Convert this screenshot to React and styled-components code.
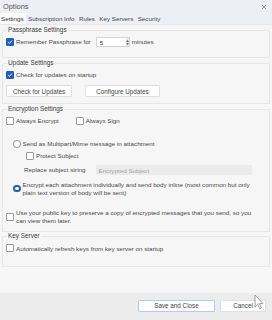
import React from "react";
import styled, { createGlobalStyle } from "styled-components";

const GlobalStyle = createGlobalStyle`
  html, body {
    margin: 0;
    padding: 0;
    background: #f6f6f6;
  }
  body {
    font-family: "Liberation Sans", Arial, sans-serif;
    -webkit-font-smoothing: antialiased;
  }
`;

const Window = styled.div`
  position: relative;
  width: 272px;
  height: 320px;
  overflow: hidden;
  display: flex;
  flex-direction: column;
  background: #f6f6f6;
  color: #4a4a4a;
  font-size: 6.25px;
`;

const TitleBar = styled.div`
  height: 13px;
  display: flex;
  align-items: center;
  justify-content: space-between;
  padding: 0 5px 0 3px;
  background: #eeeff6;
  color: #555;
  font-size: 7.4px;
`;

const TabBar = styled.div`
  height: 11px;
  display: flex;
  align-items: stretch;
  background: #eeeff6;
  border-bottom: 1px solid #e8e8ec;
`;

const Tab = styled.div`
  display: flex;
  align-items: center;
  padding: 0 2.2px 0 ${(p) => (p.$first ? "1px" : "2.2px")};
  color: ${(p) => (p.$active ? "#333" : "#444")};
  background: ${(p) => (p.$active ? "#fafafa" : "transparent")};
`;

const Content = styled.div`
  flex: 1;
  display: flex;
  flex-direction: column;
  padding: 0 2px;
`;

const Group = styled.fieldset`
  margin: ${(p) => p.$mt || 0}px 0 0;
  padding: ${(p) => p.$pt || 4}px 3px ${(p) => p.$pb || 6}px;
  border: 1px solid #e6e6e6;
  border-radius: 1px;
  min-width: 0;
  display: flex;
  flex-direction: column;
`;

const Legend = styled.legend`
  padding: 0 1px;
  margin-left: 1px;
  line-height: 8px;
  font-size: 6.4px;
  color: #3c3c3c;
`;

const Row = styled.div`
  display: flex;
  align-items: center;
  gap: ${(p) => p.$gap || 2}px;
  margin-top: ${(p) => p.$mt || 0}px;
  padding-left: ${(p) => p.$indent || 0}px;
  min-height: 8px;
`;

const Label = styled.span`
  line-height: 7.6px;
  color: #4a4a4a;
`;

const Box = styled.span`
  flex: none;
  width: 6px;
  height: 6px;
  border-radius: 1px;
  border: 0.8px solid ${(p) => (p.$checked ? "#1f5fbf" : "#9a9a9a")};
  background: ${(p) => (p.$checked ? "#1f5fbf" : "#fff")};
  display: flex;
  align-items: center;
  justify-content: center;
`;

const Radio = styled.span`
  flex: none;
  box-sizing: border-box;
  width: 7.5px;
  height: 7.5px;
  border-radius: 50%;
  border: ${(p) => (p.$checked ? "2.2px solid #1c5fd0" : "0.8px solid #8f8f8f")};
  background: #fff;
`;

const Check = ({ checked }) => (
  <Box $checked={checked}>
    {checked && (
      <svg width="6" height="6" viewBox="0 0 10 10">
        <path d="M2 5.3 L4.1 7.3 L8.2 2.6" stroke="#fff" strokeWidth="1.5" fill="none" />
      </svg>
    )}
  </Box>
);

const NumberInput = styled.div`
  width: 29px;
  height: 8px;
  margin-left: 3px;
  display: flex;
  align-items: center;
  justify-content: space-between;
  background: #fff;
  border: 0.6px solid #d4d4d4;
  padding: 0 0 0 3px;
  color: #333;
`;

const Spinner = styled.span`
  display: flex;
  flex-direction: column;
  justify-content: center;
  gap: 1px;
  width: 3px;
  height: 100%;
  background: #e8e8e8;
  align-items: center;
`;

const Button = styled.button`
  font: inherit;
  font-size: 6.3px;
  color: #444;
  height: 12px;
  width: ${(p) => p.$w}px;
  padding: 0;
  background: #fff;
  border: 0.8px solid ${(p) => (p.$primary ? "#b8cbea" : "#e0e0e0")};
  border-radius: 1px;
`;

const TextField = styled.div`
  width: 153px;
  height: 10px;
  display: flex;
  align-items: center;
  padding-left: 3px;
  margin-left: 8px;
  background: #ebebeb;
  border-radius: 1px;
  color: #a2a2a2;
`;

const Footer = styled.div`
  height: 27px;
  display: flex;
  align-items: center;
  justify-content: flex-end;
  gap: 5px;
  padding: 0 6px 2px 0;
  box-sizing: border-box;
  background: #ececec;
`;

const Cursor = styled.svg`
  position: absolute;
  left: 254px;
  top: 294px;
`;

const CloseIcon = () => (
  <svg width="6" height="6" viewBox="0 0 6 6">
    <path d="M1 1 L5 5 M5 1 L1 5" stroke="#555" strokeWidth="0.6" />
  </svg>
);

export default function App() {
  return (
    <>
      <GlobalStyle />
      <Window>
        <TitleBar>
          <span>Options</span>
          <CloseIcon />
        </TitleBar>
        <TabBar>
          <Tab $active $first>Settings</Tab>
          <Tab>Subscription Info</Tab>
          <Tab>Rules</Tab>
          <Tab>Key Servers</Tab>
          <Tab>Security</Tab>
        </TabBar>
        <Content>
          <Group $mt={1} $pt={3} $pb={10}>
            <Legend>Passphrase Settings</Legend>
            <Row>
              <Check checked />
              <Label>Remember Passphrase for</Label>
              <NumberInput>
                <span>5</span>
                <Spinner>
                  <svg width="3" height="2" viewBox="0 0 3 2"><path d="M0 2 L1.5 0 L3 2Z" fill="#666" /></svg>
                  <svg width="3" height="2" viewBox="0 0 3 2"><path d="M0 0 L1.5 2 L3 0Z" fill="#666" /></svg>
                </Spinner>
              </NumberInput>
              <Label>minutes</Label>
            </Row>
          </Group>

          <Group $mt={1} $pt={4} $pb={6}>
            <Legend>Update Settings</Legend>
            <Row>
              <Check checked />
              <Label>Check for updates on startup</Label>
            </Row>
            <Row $mt={6} $gap={13}>
              <Button $w={66}>Check for Updates</Button>
              <Button $w={75}>Configure Updates</Button>
            </Row>
          </Group>

          <Group $mt={1} $pt={4} $pb={7}>
            <Legend>Encryption Settings</Legend>
            <Row $gap={2}>
              <Check />
              <Label>Always Encrypt</Label>
              <Row $indent={15} $gap={2}>
                <Check />
                <Label>Always Sign</Label>
              </Row>
            </Row>
            <Row $mt={15} $indent={7}>
              <Radio />
              <Label>Send as Multipart/Mime message in attachment</Label>
            </Row>
            <Row $mt={4} $indent={20}>
              <Check />
              <Label>Protect Subject</Label>
            </Row>
            <Row $mt={5} $indent={18} $gap={0}>
              <Label>Replace subject string</Label>
              <TextField>Encrypted Subject</TextField>
            </Row>
            <Row $mt={6} $indent={7}>
              <Radio $checked />
              <Label>
                Encrypt each attachment individually and send body inline (most common but only
                <br />
                plain text version of body will be sent)
              </Label>
            </Row>
            <Row $mt={13}>
              <Check />
              <Label>
                Use your public key to preserve a copy of encrypted messages that you send, so you
                <br />
                can view them later.
              </Label>
            </Row>
          </Group>

          <Group $mt={0} $pt={4} $pb={14}>
            <Legend>Key Server</Legend>
            <Row>
              <Check />
              <Label>Automatically refresh keys from key server on startup</Label>
            </Row>
          </Group>
        </Content>
        <Footer>
          <Button $primary $w={77}>Save and Close</Button>
          <Button $w={46}>Cancel</Button>
        </Footer>
        <Cursor width="10" height="16" viewBox="0 0 10 16">
          <path d="M1 1 L1 13 L3.8 10.4 L5.8 14.8 L7.4 14 L5.5 9.7 L9 9.5 Z" fill="#fff" stroke="#777" strokeWidth="0.7" />
        </Cursor>
      </Window>
    </>
  );
}
